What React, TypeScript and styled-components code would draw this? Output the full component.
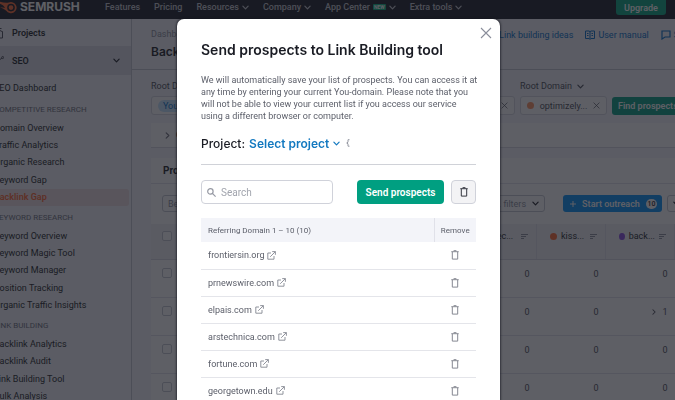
import React from 'react';
import styled, { createGlobalStyle } from 'styled-components';

const GlobalStyle = createGlobalStyle`
  *, *::before, *::after { box-sizing: border-box; }
  html, body { margin: 0; height: 100%; overflow: hidden; }
  body { font-family: Roboto, "Liberation Sans", sans-serif; font-size: 9px; color: #191b23; background: #f3f4fa; }
  button, input { font: inherit; }
  a { color: inherit; text-decoration: none; }
  ul, h1, h2, h3, p { margin: 0; padding: 0; list-style: none; }
  svg { display: block; flex: none; }
`;

const Page = styled.div`
  height: 100vh;
  display: flex;
  flex-direction: column;
  overflow: hidden;
`;

const TopBar = styled.header`
  flex: none;
  height: 19px;
  display: flex;
  align-items: flex-start;
  background: #171a22;
  color: #c4c7cf;
`;

const Logo = styled.a`
  display: flex;
  align-items: center;
  gap: 3px;
  width: 105px;
  height: 14px;
  color: #fff;
  font-family: Inter, "Liberation Sans", sans-serif;
  font-size: 12px;
  font-weight: 700;
  line-height: 14px;
`;

const TopNav = styled.nav`
  display: flex;
  gap: 14px;
  flex: 1;
`;

const TopLink = styled.a`
  display: flex;
  align-items: center;
  gap: 3px;
  height: 14px;
  font-weight: 500;
  white-space: nowrap;
`;

const NewTag = styled.span`
  padding: 0 1px;
  border-radius: 1px;
  background: #00b37d;
  color: #fff;
  font-size: 5px;
  line-height: 6px;
  font-weight: 700;
`;

const Upgrade = styled.button`
  height: 15px;
  width: 50px;
  margin-right: 9px;
  padding: 0;
  border: 0;
  border-radius: 0 0 3px 3px;
  background: #00a37c;
  color: #fff;
  font-weight: 600;
`;

const Body = styled.div`
  flex: 1;
  min-height: 0;
  display: flex;
`;

const Sidebar = styled.aside`
  flex: none;
  width: 132px;
  overflow: hidden;
  border-right: 1px solid #c4c7cf;
  background: #f3f4fa;
`;

const SideTop = styled.a<{ $open?: boolean }>`
  display: flex;
  align-items: center;
  gap: 8px;
  height: ${(p) => (p.$open ? 29 : 27)}px;
  padding-right: 11px;
  font-weight: 600;
  background: ${(p) => (p.$open ? '#dcdee6' : 'transparent')};
  & > span { flex: 1; }
`;

const SideGroup = styled.ul<{ $rows: number }>`
  display: grid;
  height: ${(p) => Math.round(p.$rows * 17.4)}px;
  margin-left: -6px;
  margin-right: 2px;
`;

const SideLink = styled.a<{ $active?: boolean }>`
  display: flex;
  align-items: center;
  height: 100%;
  border-radius: 3px;
  white-space: nowrap;
  font-weight: ${(p) => (p.$active ? 600 : 400)};
  color: ${(p) => (p.$active ? '#ff642d' : '#191b23')};
  background: ${(p) => (p.$active ? '#eedcdf' : 'transparent')};
`;

const SideHome = styled.div`
  height: 23px;
  margin-left: -6px;
  padding-top: 3px;
`;

const SideHeading = styled.h3`
  height: 18px;
  margin: 3px 0 0 -6px;
  font-size: 8px;
  line-height: 18px;
  font-weight: 400;
  color: #6c6e79;
  white-space: nowrap;
`;

const Main = styled.main`
  flex: 1;
  min-width: 0;
  display: flex;
  flex-direction: column;
  overflow: hidden;
  background: #f3f4fa;
`;

const PageHead = styled.div`
  flex: none;
  display: flex;
  justify-content: space-between;
  height: 51px;
  padding: 8px 0 0 19px;
  border-bottom: 1px solid #c4c7cf;
`;

const Crumb = styled.a`
  display: block;
  line-height: 15px;
  color: #8a8e9b;
`;

const PageTitle = styled.h1`
  font-family: Inter, "Liberation Sans", sans-serif;
  font-size: 12px;
  line-height: 20px;
  font-weight: 600;
`;

const HelpLinks = styled.nav`
  display: flex;
  gap: 12px;
  margin-right: -58px;
  color: #006dca;
  a { display: flex; align-items: center; gap: 3px; height: 15px; white-space: nowrap; }
`;

const Filters = styled.div`
  flex: none;
  display: flex;
  justify-content: space-between;
  height: 53px;
  padding: 8px 0 0 19px;
`;

const FilterRight = styled.div`
  display: flex;
  align-items: flex-end;
  gap: 5px;
  height: 37px;
  margin-right: -9px;
`;

const Field = styled.div<{ $width: number }>`
  width: ${(p) => p.$width}px;
`;

const FieldLabel = styled.div`
  display: flex;
  align-items: center;
  gap: 5px;
  height: 16px;
  margin-bottom: 2px;
  color: #484a54;
  white-space: nowrap;
`;

const Chip = styled.div`
  display: flex;
  align-items: center;
  justify-content: space-between;
  height: 19px;
  padding: 0 6px;
  border: 1px solid #d5d8e0;
  border-radius: 3px;
  background: #fff;
  color: #484a54;
`;

const You = styled.span`
  padding: 0 5px;
  border-radius: 6px;
  background: #c4e5fe;
  color: #006dca;
  line-height: 12px;
`;

const Dot = styled.span<{ $color: string }>`
  width: 7px;
  height: 7px;
  border-radius: 50%;
  background: ${(p) => p.$color};
`;

const Find = styled.button`
  width: 72px;
  height: 18px;
  padding: 0 6px;
  border: 0;
  border-radius: 3px;
  background: #009f81;
  color: #fff;
  font-weight: 600;
  text-align: left;
  white-space: nowrap;
`;

const Notice = styled.section`
  flex: none;
  display: flex;
  align-items: center;
  gap: 5px;
  height: 25px;
  margin: 0 0 10px 19px;
  padding-left: 13px;
  border-bottom: 1px solid #d5d8e0;
  background: #fff;
  font-weight: 700;
  svg { color: #6c6e79; }
`;

const Card = styled.section`
  flex: 1;
  margin-left: 19px;
  background: #fff;
`;

const CardTitle = styled.h2`
  height: 26px;
  padding-left: 12px;
  border-bottom: 1px solid #e0e1e9;
  font-size: 10px;
  line-height: 26px;
  font-weight: 700;
`;

const Tools = styled.div`
  display: flex;
  justify-content: space-between;
  height: 40px;
  padding: 11px 0 0 11px;
`;

const ToolGroup = styled.div`
  display: flex;
  gap: 5px;
  margin-right: -14px;
`;

const Outline = styled.button<{ $width: number; $gap?: number }>`
  display: flex;
  align-items: center;
  justify-content: space-between;
  width: ${(p) => p.$width}px;
  height: 17px;
  margin-right: ${(p) => p.$gap || 0}px;
  padding: 0 5px;
  border: 1px solid #c4c7cf;
  border-radius: 3px;
  background: #fff;
  color: #8a8e9b;
  white-space: nowrap;
  svg { color: #191b23; }
`;

const Outreach = styled.button`
  display: flex;
  align-items: center;
  justify-content: space-between;
  width: 99px;
  height: 17px;
  padding: 0 5px 0 7px;
  border: 0;
  border-radius: 3px;
  background: #008ff8;
  color: #fff;
  font-weight: 600;
  white-space: nowrap;
`;

const Count = styled.span`
  width: 11px;
  border-radius: 5px;
  background: #fff;
  color: #191b23;
  font-size: 7px;
  line-height: 10px;
  font-weight: 500;
  text-align: center;
`;

const Grid = styled.table`
  width: 100%;
  border-collapse: collapse;
  table-layout: fixed;
  th { height: 35px; padding: 7px 8px 0 13px; background: #f0f1f6; border-right: 1px solid #e0e1e9; border-bottom: 1px solid #d5d8e0; vertical-align: top; font-weight: 400; text-align: left; }
  td { height: 38px; padding: 8px 7px 0 11px; border-bottom: 1px solid #e0e1e9; vertical-align: top; text-align: right; color: #484a54; line-height: 12px; }
  th:first-child, td:first-child { padding-left: 11px; text-align: left; }
`;

const Tick = styled.input`
  display: block;
  appearance: none;
  width: 10px;
  height: 10px;
  margin: 0;
  border: 1px solid #c4c7cf;
  border-radius: 2px;
  background: #fff;
`;

const ColHead = styled.span`
  display: flex;
  align-items: center;
  gap: 4px;
  height: 10px;
  & > b { flex: 1; font-weight: 400; white-space: nowrap; }
`;

const More = styled.span`
  display: inline-flex;
  align-items: center;
  gap: 5px;
`;

const Backdrop = styled.div`
  position: fixed;
  inset: 0;
  display: flex;
  justify-content: center;
  padding: 19px 0 0 2px;
  background: rgba(25, 27, 35, 0.7);
`;

const Dialog = styled.section`
  position: relative;
  width: 100%;
  max-width: 323px;
  min-height: 100%;
  padding: 21px 24px 0;
  border-radius: 7px 7px 0 0;
  background: #fff;
  box-shadow: 0 0 2px 1px rgba(20, 22, 30, 0.6);
`;

const Close = styled.button`
  position: absolute;
  top: 8px;
  right: 8px;
  padding: 0;
  border: 0;
  background: none;
  color: #8a8e9b;
`;

const DialogTitle = styled.h2`
  font-family: Inter, "Liberation Sans", sans-serif;
  font-size: 14px;
  line-height: 20px;
  font-weight: 600;
  white-space: nowrap;
`;

const Intro = styled.p`
  margin-top: 14px;
  margin-right: -3px;
  font-size: 9px;
  line-height: 12px;
  color: #5b5e69;
`;

const ProjectRow = styled.div`
  display: flex;
  align-items: center;
  gap: 4px;
  height: 20px;
  margin-top: 11px;
  font-family: Inter, "Liberation Sans", sans-serif;
  font-size: 12px;
  font-weight: 500;
`;

const ProjectPick = styled.button`
  display: flex;
  align-items: center;
  gap: 4px;
  padding: 0;
  margin-right: 2px;
  border: 0;
  background: none;
  color: #1379c0;
  font-weight: 600;
`;

const Actions = styled.div`
  display: flex;
  gap: 7px;
  margin-top: 11px;
  padding: 15px 0 14px;
  border-top: 1px solid #d0d2d8;
`;

const SearchBox = styled.label`
  display: flex;
  align-items: center;
  gap: 5px;
  width: 132px;
  height: 24px;
  margin-right: auto;
  padding: 0 5px;
  border: 1px solid #d0d2da;
  border-radius: 4px;
  color: #9699a3;
  input { flex: 1; min-width: 0; padding: 0; border: 0; outline: 0; background: none; font-size: 10px; }
  input::placeholder { color: #a2a5ae; opacity: 1; }
`;

const Send = styled.button`
  width: 87px;
  height: 24px;
  padding: 0;
  border: 0;
  border-radius: 4px;
  background: #009f81;
  color: #fff;
  font-size: 10px;
  font-weight: 600;
  white-space: nowrap;
`;

const DeleteAll = styled.button`
  display: grid;
  place-items: center;
  width: 25px;
  height: 24px;
  padding: 0;
  border: 1px solid #d0d2da;
  border-radius: 4px;
  background: #f3f3f5;
  color: #34363f;
`;

const Prospects = styled.table`
  width: 100%;
  border-collapse: collapse;
  th { height: 24px; padding: 0 7px; background: #f3f4f9; font-size: 8px; font-weight: 400; text-align: left; color: #5b5e69; }
  th:last-child { width: 42px; padding: 0; border-left: 1px solid #e0e1e9; text-align: center; }
  td { height: 27px; padding: 0 7px; border-bottom: 1px solid #e4e5ea; color: #5b5e69; }
  td:last-child { padding: 0; }
`;

const DomainLink = styled.a`
  display: flex;
  align-items: center;
  gap: 3px;
`;

const Remove = styled.button`
  display: block;
  margin: 0 auto;
  padding: 0;
  border: 0;
  background: none;
  color: #858892;
`;

const Chevron = ({ size = 7, turn = false }: { size?: number; turn?: boolean }) => (
  <svg width={size} height={size} viewBox="0 0 8 8" fill="none" stroke="currentColor" strokeWidth="1.4" strokeLinecap="round" strokeLinejoin="round" aria-hidden="true">
    <path d={turn ? 'M2.5 1 5.5 4l-3 3' : 'M1 2.5 4 5.5l3-3'} />
  </svg>
);

const Cross = ({ size, width = 1.2 }: { size: number; width?: number }) => (
  <svg width={size} height={size} viewBox="0 0 12 12" fill="none" stroke="currentColor" strokeWidth={width} aria-hidden="true">
    <path d="m1 1 10 10M11 1 1 11" />
  </svg>
);

const Plus = () => (
  <svg width="6" height="6" viewBox="0 0 6 6" stroke="currentColor" aria-hidden="true">
    <path d="M3 0v6M0 3h6" />
  </svg>
);

const Trash = () => (
  <svg width="8" height="10" viewBox="0 0 8 10" fill="none" stroke="currentColor" aria-hidden="true">
    <path d="M.3 1.7h7.4M2.8 1V.7h2.4V1M1.3 2v7.1h5.4V2" />
  </svg>
);

const External = () => (
  <svg width="9" height="9" viewBox="0 0 9 9" fill="none" stroke="#858892" strokeWidth=".9" aria-hidden="true">
    <path d="M4 2H.8v6.2H7V5M5.2.6h3.2v3.2M8.3.7 3.2 5.8" />
  </svg>
);

const SortIcon = () => (
  <svg width="7" height="7" viewBox="0 0 7 7" stroke="#8a8e9b" aria-hidden="true">
    <path d="M0 1.5h7M0 3.5h5M0 5.5h3" />
  </svg>
);

const Flame = () => (
  <svg width="17" height="13" viewBox="0 0 17 13" aria-hidden="true">
    <path d="M0 .8c3 .7 6 1.2 8.8.7a5.6 5.6 0 1 1-2.5 8.2C4.5 8.3 2.4 6.9 0 6.2c2 .1 3.7.4 5 .8C4 5 2 3.5 0 2.8Z" fill="#ff642d" />
    <circle cx="11" cy="6.6" r="3.1" fill="none" stroke="#171a22" strokeWidth="1.5" />
  </svg>
);

const groups = [
  { title: 'COMPETITIVE RESEARCH', items: ['Domain Overview', 'Traffic Analytics', 'Organic Research', 'Keyword Gap', 'Backlink Gap'] },
  { title: 'KEYWORD RESEARCH', items: ['Keyword Overview', 'Keyword Magic Tool', 'Keyword Manager', 'Position Tracking', 'Organic Traffic Insights'] },
  { title: 'LINK BUILDING', items: ['Backlink Analytics', 'Backlink Audit', 'Link Building Tool', 'Bulk Analysis'] },
];

const domains = ['frontiersin.org', 'prnewswire.com', 'elpais.com', 'arstechnica.com', 'fortune.com', 'georgetown.edu'];

const rows = [
  ['0', '0', '0'],
  ['0', '0', '1'],
  ['0', '0', '0'],
  ['0', '0', '0'],
];

const columns = [
  { name: 'sec...', color: '#2bb3ff' },
  { name: 'kiss...', color: '#ff642d' },
  { name: 'back...', color: '#8649e1' },
];

export default function App() {
  return (
    <>
      <GlobalStyle />
      <Page>
        <TopBar>
          <Logo href="#"><Flame />SEMRUSH</Logo>
          <TopNav>
            <TopLink href="#">Features</TopLink>
            <TopLink href="#">Pricing</TopLink>
            <TopLink href="#">Resources <Chevron /></TopLink>
            <TopLink href="#">Company <Chevron /></TopLink>
            <TopLink href="#">App Center <NewTag>NEW</NewTag><Chevron /></TopLink>
            <TopLink href="#">Extra tools <Chevron /></TopLink>
          </TopNav>
          <Upgrade>Upgrade</Upgrade>
        </TopBar>
        <Body>
          <Sidebar>
            <SideTop href="#">
              <svg width="4" height="12" viewBox="0 0 4 12" fill="none" stroke="#484a54" aria-hidden="true"><path d="M0 3.5 3 5M2.5 5v6H0M0 1.5h1.5" /></svg>
              <span>Projects</span>
            </SideTop>
            <SideTop href="#" $open>
              <svg width="4" height="12" viewBox="0 0 4 12" fill="none" stroke="#484a54" aria-hidden="true"><path d="M0 4.5 2 3" /><circle cx="2.7" cy="2.5" r="1" /></svg>
              <span>SEO</span>
              <Chevron />
            </SideTop>
            <SideHome><SideLink href="#">SEO Dashboard</SideLink></SideHome>
            {groups.map((g) => (
              <React.Fragment key={g.title}>
                <SideHeading>{g.title}</SideHeading>
                <SideGroup $rows={g.items.length}>
                  {g.items.map((i) => (
                    <li key={i}><SideLink href="#" $active={i === 'Backlink Gap'}>{i}</SideLink></li>
                  ))}
                </SideGroup>
              </React.Fragment>
            ))}
          </Sidebar>
          <Main>
            <PageHead>
              <div>
                <Crumb href="#">Dashboard</Crumb>
                <PageTitle>Backlink Gap</PageTitle>
              </div>
              <HelpLinks>
                <a href="#">Link building ideas</a>
                <a href="#">
                  <svg width="10" height="10" viewBox="0 0 10 10" fill="none" stroke="currentColor" aria-hidden="true"><path d="M5 1.5v7M.5 1H4l1 .7L6 1h3.5v7.5H6L5 9.3l-1-.8H.5ZM2 3.5h1.5M2 5.5h1.5M6.5 3.5H8M6.5 5.5H8" /></svg>
                  User manual
                </a>
                <a href="#">
                  <svg width="10" height="10" viewBox="0 0 10 10" fill="none" stroke="currentColor" strokeWidth="1.2" aria-hidden="true"><path d="M1 1h8v6H4L1 9Z" /></svg>
                  Send feedback
                </a>
              </HelpLinks>
            </PageHead>
            <Filters>
              <Field $width={80}>
                <FieldLabel>Root Domain</FieldLabel>
                <Chip><You>You</You></Chip>
              </Field>
              <FilterRight>
                <Field $width={87}>
                  <FieldLabel />
                  <Chip><span /><Cross size={7} /></Chip>
                </Field>
                <Field $width={87}>
                  <FieldLabel>Root Domain <Chevron /></FieldLabel>
                  <Chip><Dot $color="#ff8f5c" />optimizely...<Cross size={7} /></Chip>
                </Field>
                <Find>Find prospects</Find>
              </FilterRight>
            </Filters>
            <Notice><Chevron turn />Get</Notice>
            <Card>
              <CardTitle>Prospects</CardTitle>
              <Tools>
                <Outline $width={60}>Best</Outline>
                <ToolGroup>
                  <Outline $width={67} $gap={13}>Adv. filters <Chevron /></Outline>
                  <Outreach><Plus /><span>Start outreach</span><Count>10</Count></Outreach>
                  <Outline $width={22}><Chevron /></Outline>
                </ToolGroup>
              </Tools>
              <Grid>
                <colgroup>
                  <col />
                  <col width="69" />
                  <col width="69" />
                  <col width="69" />
                </colgroup>
                <thead>
                  <tr>
                    <th><Tick type="checkbox" aria-label="Select all" /></th>
                    {columns.map((c) => (
                      <th key={c.name}><ColHead><Dot $color={c.color} /><b>{c.name}</b><SortIcon /></ColHead></th>
                    ))}
                  </tr>
                </thead>
                <tbody>
                  {rows.map((r, i) => (
                    <tr key={i}>
                      <td><Tick type="checkbox" aria-label={`Select row ${i + 1}`} /></td>
                      {r.map((v, j) => (
                        <td key={j}>{v === '0' ? v : <More><Chevron turn size={6} />{v}</More>}</td>
                      ))}
                    </tr>
                  ))}
                </tbody>
              </Grid>
            </Card>
          </Main>
        </Body>
      </Page>
      <Backdrop>
        <Dialog role="dialog" aria-modal="true" aria-labelledby="dialog-title">
          <Close aria-label="Close"><Cross size={12} width={1.1} /></Close>
          <DialogTitle id="dialog-title">Send prospects to Link Building tool</DialogTitle>
          <Intro>
            We will automatically save your list of prospects. You can access it at any time by entering your current
            You-domain. Please note that you will not be able to view your current list if you access our service using a
            different browser or computer.
          </Intro>
          <ProjectRow>
            <span>Project:</span>
            <ProjectPick>Select project <Chevron /></ProjectPick>
            <svg width="4" height="8" viewBox="0 0 4 8" fill="none" stroke="#9699a3" aria-hidden="true"><path d="M3.5.7H2v2.5L.7 4 2 4.8v2.4h1.5" /></svg>
          </ProjectRow>
          <Actions>
            <SearchBox>
              <svg width="9" height="9" viewBox="0 0 9 9" fill="none" stroke="currentColor" strokeWidth="1.2" aria-hidden="true"><circle cx="3.4" cy="3.4" r="2.7" /><path d="m5.4 5.4 3.2 3.2" /></svg>
              <input type="text" placeholder="Search" aria-label="Search" />
            </SearchBox>
            <Send>Send prospects</Send>
            <DeleteAll aria-label="Remove all"><Trash /></DeleteAll>
          </Actions>
          <Prospects>
            <thead>
              <tr><th>Referring Domain 1 – 10 (10)</th><th>Remove</th></tr>
            </thead>
            <tbody>
              {domains.map((d) => (
                <tr key={d}>
                  <td><DomainLink href="#">{d}<External /></DomainLink></td>
                  <td><Remove aria-label={`Remove ${d}`}><Trash /></Remove></td>
                </tr>
              ))}
            </tbody>
          </Prospects>
        </Dialog>
      </Backdrop>
    </>
  );
}
